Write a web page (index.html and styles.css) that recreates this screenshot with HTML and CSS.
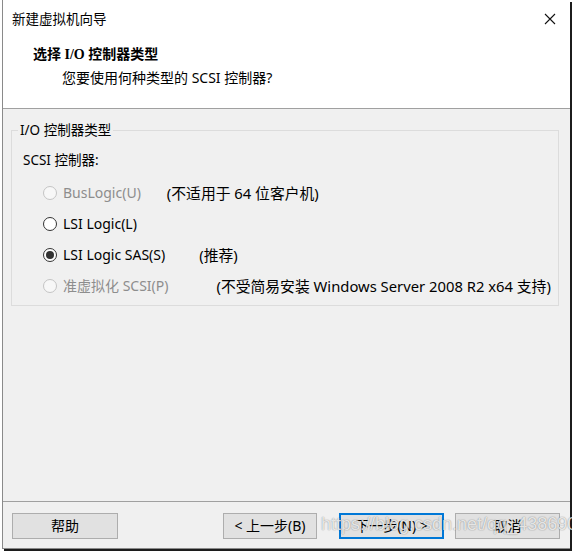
FILE: index.html
```html
<!DOCTYPE html>
<html lang="zh-CN">
<head>
  <meta charset="UTF-8" />
  <title>新建虚拟机向导</title>
  <link rel="stylesheet" href="styles.css">
</head>
<body>
  <div class="window">
    <div class="titlebar">
      <span class="title">新建虚拟机向导</span>
      <svg class="close" width="12" height="12" viewBox="0 0 12 12">
        <path d="M1 1 L11 11 M11 1 L1 11" stroke="#111" stroke-width="1.1" fill="none"/>
      </svg>
    </div>

    <div class="header">
      <h1>选择 I/O 控制器类型</h1>
      <p>您要使用何种类型的 SCSI 控制器?</p>
    </div>

    <div class="content">
      <fieldset class="group">
        <legend>I/O 控制器类型</legend>
        <div class="group-label">SCSI 控制器:</div>

        <div class="options">
          <div class="option disabled">
            <span class="radio"></span>
            <span class="opt-text">BusLogic(U)</span>
            <span class="note note-u">(不适用于 64 位客户机)</span>
          </div>
          <div class="option">
            <span class="radio"></span>
            <span class="opt-text">LSI Logic(L)</span>
          </div>
          <div class="option">
            <span class="radio checked"></span>
            <span class="opt-text">LSI Logic SAS(S)</span>
            <span class="note note-s">(推荐)</span>
          </div>
          <div class="option disabled">
            <span class="radio"></span>
            <span class="opt-text">准虚拟化 SCSI(P)</span>
            <span class="note note-p">(不受简易安装 Windows Server 2008 R2 x64 支持)</span>
          </div>
        </div>
      </fieldset>
    </div>

    <div class="footer">
      <button class="btn btn-help">帮助</button>
      <div class="nav">
        <button class="btn btn-back">&lt; 上一步(B)</button>
        <button class="btn btn-next">下一步(N) &gt;</button>
        <button class="btn btn-cancel">取消</button>
      </div>
    </div>

    <!-- watermark from the screenshot -->
    <div class="watermark">https://blog.csdn.net/qq_43869033</div>
  </div>
</body>
</html>
```

FILE: styles.css
```css
* {
  box-sizing: border-box;
  margin: 0;
  padding: 0;
}

body {
  background: #fff;
  font-family: "Noto Sans", "Noto Sans CJK SC", sans-serif;
  font-size: 14px;
  color: #000;
  width: 572px;
  height: 551px;
  overflow: hidden;
}

.window {
  position: relative;
  margin-left: 2px;
  width: 568px;
  height: 549px;
  background: #f0f0f0;
  border-left: 1px solid #8a8a8a;
  border-bottom: 1px solid #8a8a8a;
  box-shadow: 2px 2px 0 #1c1c1c;
  display: flex;
  flex-direction: column;
}

.titlebar {
  height: 37px;
  background: #fff;
  display: flex;
  align-items: center;
  justify-content: space-between;
  padding: 0 14px 0 9px;
}

.title {
  font-size: 13.5px;
  line-height: 20px;
}

.header {
  background: #fff;
  padding: 8px 0 20px 30px;
  border-bottom: 1px solid #a0a0a0;
}

.header h1 {
  font-family: "Liberation Serif", "Noto Sans CJK SC", serif;
  font-size: 14px;
  font-weight: bold;
  line-height: 20px;
}

.header p {
  margin: 3px 0 0 29px;
  font-size: 14px;
  line-height: 20px;
}

.content {
  flex: 1;
  padding: 11px 11px 0 8px;
}

.group {
  border: 1px solid #dcdcdc;
  padding: 0 0 4px 11px;
}

.group legend {
  margin-left: -5px;
  padding: 0 2px;
  line-height: 20px;
  font-size: 13.5px;
}

.group-label {
  margin-top: 10px;
  line-height: 20px;
  font-size: 13.5px;
}

.options {
  margin-top: 7px;
}

.option {
  display: flex;
  align-items: center;
  height: 31px;
  padding-left: 20px;
}

.radio {
  width: 14px;
  height: 14px;
  border: 1px solid #333;
  border-radius: 50%;
  background: #fff;
  margin-right: 6px;
  display: flex;
  align-items: center;
  justify-content: center;
}

.radio.checked::after {
  content: "";
  width: 8px;
  height: 8px;
  border-radius: 50%;
  background: #333;
}

.opt-text {
  line-height: 20px;
  font-size: 14px;
}

.disabled .radio {
  border-color: #c4c4c4;
  background: #f7f7f7;
}

.disabled .opt-text {
  color: #8d8d8d;
}

.note {
  line-height: 20px;
  font-size: 14.8px;
  color: #000;
}

.note-u { margin-left: 26px; }
.note-s { margin-left: 34px; }
.note-p { margin-left: 48px; }

.footer {
  border-top: 1px solid #a0a0a0;
  padding: 11px 10px 9px 9px;
  display: flex;
  align-items: center;
}

.nav {
  margin-left: auto;
  display: flex;
}

.btn {
  height: 26px;
  background: #e1e1e1;
  border: 1px solid #adadad;
  font-family: "Noto Sans", "Noto Sans CJK SC", sans-serif;
  font-size: 14px;
  color: #000;
  line-height: 20px;
}

.btn-help { width: 106px; }
.btn-back { width: 94px; }
.btn-next {
  width: 105px;
  margin-left: 22px;
  border: 2px solid #0078d7;
}
.btn-cancel {
  width: 105px;
  margin-left: 11px;
}

.watermark {
  position: absolute;
  left: 318px;
  top: 514px;
  font-family: "Liberation Sans", sans-serif;
  font-size: 18px;
  color: rgba(255, 255, 255, 0.8);
  text-shadow: 0 0 1px rgba(0, 0, 0, 0.4), 0 0 2px rgba(0, 0, 0, 0.15);
  pointer-events: none;
  white-space: nowrap;
}
```
